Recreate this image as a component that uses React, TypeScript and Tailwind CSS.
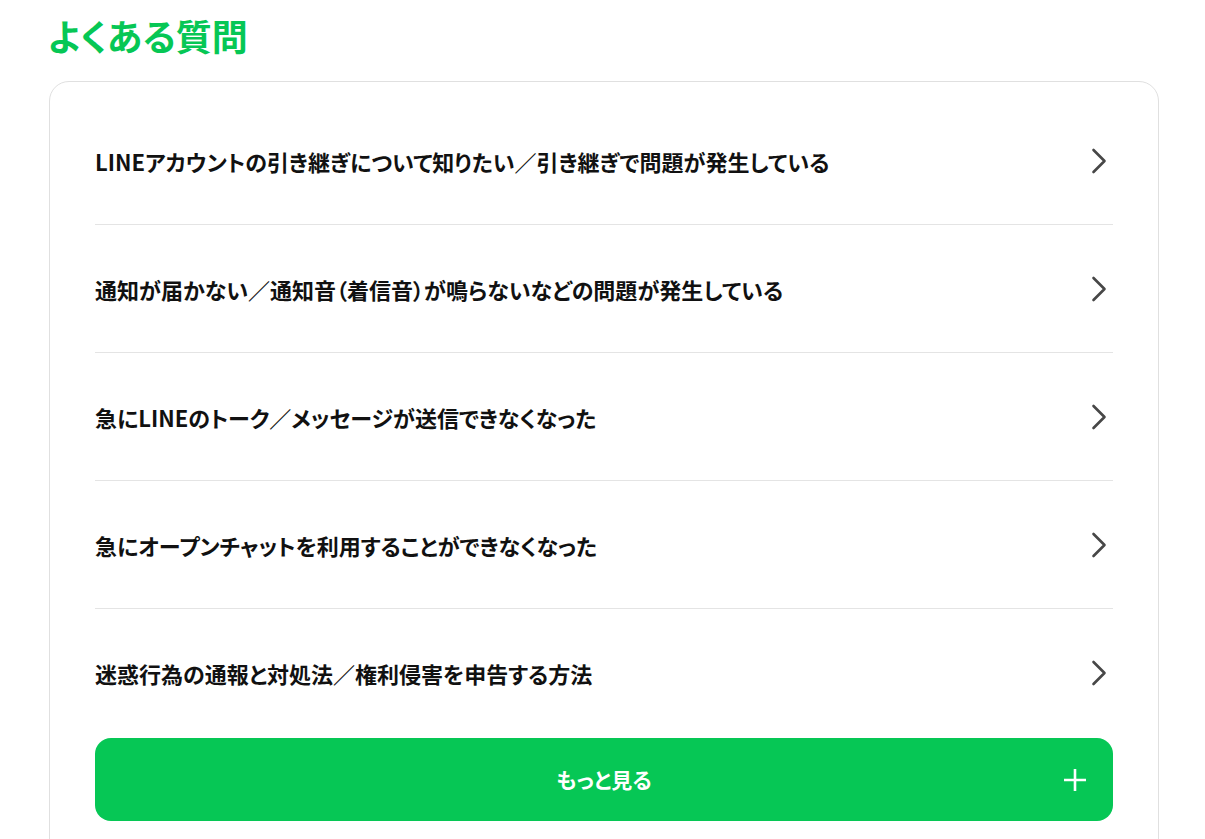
const FAQS = [
  'LINEアカウントの引き継ぎについて知りたい／引き継ぎで問題が発生している',
  '通知が届かない／通知音（着信音）が鳴らないなどの問題が発生している',
  '急にLINEのトーク／メッセージが送信できなくなった',
  '急にオープンチャットを利用することができなくなった',
  '迷惑行為の通報と対処法／権利侵害を申告する方法',
]

function Chevron() {
  return (
    <svg width="16" height="26" viewBox="0 0 16 26" fill="none" className="mr-[6px] shrink-0">
      <polyline points="2.5,2 13.5,13 2.5,24" stroke="#474747" strokeWidth="2.6" strokeLinecap="round" strokeLinejoin="round" />
    </svg>
  )
}

export default function App() {
  return (
    <div className="min-h-screen bg-white pl-[49px] pr-[46px] pt-[11px] text-[#111] [font-family:'Noto_Sans_CJK_JP','Noto_Sans',sans-serif] [font-feature-settings:'palt']">
      <h2 className="ml-[-1px] text-[36px] font-bold leading-[48px] text-[#06c755]">よくある質問</h2>
      <div className="mt-[22px] rounded-[20px] border border-[#e0e0e0] px-[45px] pt-[15px] pb-[40px]">
        <ul>
          {FAQS.map((q, i) => (
            <li key={q} className={i < FAQS.length - 1 ? 'border-b border-[#e4e4e4]' : ''}>
              <a href="#" className="flex h-[127px] items-center justify-between">
                <span className="text-[22px] font-bold leading-[30px]">{q}</span>
                <Chevron />
              </a>
            </li>
          ))}
        </ul>
        <button className="relative mt-[2px] flex h-[83px] w-full items-center justify-center rounded-[16px] bg-[#06c755] text-white">
          <span className="text-[21px] font-bold">もっと見る</span>
          <svg width="24" height="24" viewBox="0 0 24 24" className="absolute right-[26px]">
            <path d="M12 1v22M1 12h22" stroke="white" strokeWidth="2.6" />
          </svg>
        </button>
      </div>
    </div>
  )
}
